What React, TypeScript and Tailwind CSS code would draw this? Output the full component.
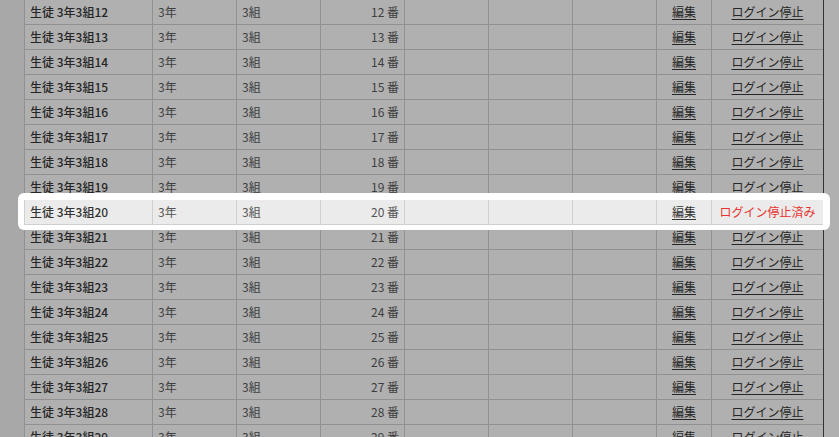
const students = Array.from({ length: 18 }, (_, i) => i + 12);

const cols = 'grid grid-cols-[128px_84px_84px_84px_84px_84px_84px_55px_112px]';

function Row({ n, active }: { n: number; active: boolean }) {
  const line = active ? 'border-l border-[#cfcfcf]' : 'border-l border-[#c0c0c0]';
  return (
    <div
      className={`${cols} h-[25px] border-b bg-[#ebebeb] text-[12px] leading-[24px] ${
        active ? 'relative z-20 border-[#cfcfcf]' : 'border-[#c0c0c0]'
      }`}
    >
      <div className={`${line} pl-[5px] font-medium text-[#333]`}>生徒 3年3組{n}</div>
      <div className={`${line} pl-[5px] text-[#555]`}>3年</div>
      <div className={`${line} pl-[5px] text-[#555]`}>3組</div>
      <div className={`${line} pr-[5px] text-right text-[#555]`}>{n} 番</div>
      <div className={line} />
      <div className={line} />
      <div className={line} />
      <div className={`${line} text-center`}>
        <a href="#" className="text-[#333] underline underline-offset-2">編集</a>
      </div>
      <div className={`${line} text-center`}>
        {active ? (
          <span className="text-[#e8322e]">ログイン停止済み</span>
        ) : (
          <a href="#" className="text-[#333] underline underline-offset-2">ログイン停止</a>
        )}
      </div>
    </div>
  );
}

export default function App() {
  return (
    <div
      className="relative h-[437px] w-[839px] overflow-hidden bg-[#e0e0e0]"
      style={{ fontFamily: '"Noto Sans CJK JP", "Noto Sans", sans-serif' }}
    >
      <div className="flex">
        <div className="w-[24px] shrink-0" />
        <div className="border-r border-[#444]">
          {students.map((n) => (
            <Row key={n} n={n} active={n === 20} />
          ))}
        </div>
        <div className="flex-1 bg-[#ebebeb]" />
      </div>

      {/* tour spotlight */}
      <div className="absolute left-[18px] top-[193px] z-10 h-[37px] w-[812px] rounded-md bg-white shadow-[0_0_0_9999px_rgba(0,0,0,0.25)]" />
    </div>
  );
}
